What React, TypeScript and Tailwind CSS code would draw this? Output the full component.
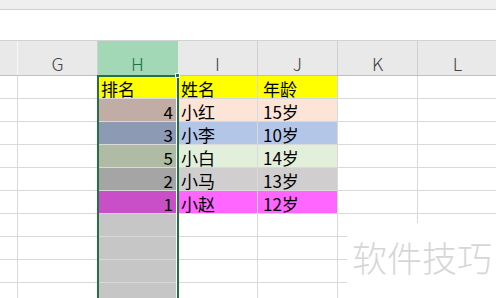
const COLS = ["G", "H", "I", "J", "K", "L"];

type Row = {
  rank?: string;
  name?: string;
  age?: string;
  rankBg?: string;
  bg?: string;
  header?: boolean;
};

const ROWS: Row[] = [
  { rank: "排名", name: "姓名", age: "年龄", rankBg: "bg-[#ffff00]", bg: "bg-[#ffff00]", header: true },
  { rank: "4", name: "小红", age: "15岁", rankBg: "bg-[#c1ada5]", bg: "bg-[#fce4d6]" },
  { rank: "3", name: "小李", age: "10岁", rankBg: "bg-[#8d9ab4]", bg: "bg-[#b4c6e7]" },
  { rank: "5", name: "小白", age: "14岁", rankBg: "bg-[#b0bba6]", bg: "bg-[#e2efda]" },
  { rank: "2", name: "小马", age: "13岁", rankBg: "bg-[#a5a5a5]", bg: "bg-[#d0cece]" },
  { rank: "1", name: "小赵", age: "12岁", rankBg: "bg-[#c84fc8]", bg: "bg-[#ff66ff]" },
  {},
  {},
  {},
  {},
];

const cell = "h-[23px] shrink-0 border-r border-b border-[#d9d9d9]";

function SheetRow({ row }: { row: Row }) {
  const empty = !row.rank;
  return (
    <div className="flex">
      <div className={`${cell} w-[18px]`} />
      <div className={`${cell} w-[80px]`} />
      <div
        className={`${cell} w-[80px] flex items-end pb-[1px] ${
          empty ? "bg-[#c6c6c6] border-[#b2b2b2]" : `${row.rankBg} border-[#b2b2b2]`
        } ${row.header ? "justify-start pl-[3px]" : "justify-end pr-[4px]"}`}
      >
        {row.rank}
      </div>
      <div className={`${cell} w-[80px] flex items-end pb-[1px] pl-[3px] ${row.bg ?? ""}`}>{row.name}</div>
      <div className={`${cell} w-[80px] flex items-end pb-[1px] pl-[5px] ${row.bg ?? ""}`}>{row.age}</div>
      <div className={`${cell} w-[80px]`} />
      <div className={`${cell} w-[80px]`} />
    </div>
  );
}

export default function App() {
  return (
    <div
      className="relative w-[496px] h-[298px] overflow-hidden bg-white text-[17px] leading-none text-black"
      style={{ fontFamily: '"Noto Sans CJK SC", "Noto Sans", sans-serif' }}
    >
      <div className="h-[10px] bg-[#efefef] border-b border-[#d2d2d2]" />
      <div className="h-[31px] bg-white border-b border-[#d2d2d2]" />

      <div className="flex h-[35px] bg-[#e9e9e9] border-b border-[#bfbfbf] text-[18px] font-light text-[#444]">
        <div className="w-[18px] shrink-0 border-r border-[#f8f8f8]" />
        {COLS.map((c) => (
          <div
            key={c}
            className={`w-[80px] shrink-0 flex items-end justify-center pb-[3px] border-r ${
              c === "H" ? "bg-[#a3d8b6] text-[#217346] border-[#a3d8b6]" : "border-[#d0d0d0]"
            }`}
          >
            {c}
          </div>
        ))}
      </div>

      {ROWS.map((row, i) => (
        <SheetRow key={i} row={row} />
      ))}

      {/* selection box on column H */}
      <div className="absolute left-[97px] top-[75px] w-[82px] h-[240px] border-2 border-[#217346]">
        <div className="absolute right-0 top-0 bottom-0 w-px bg-white" />
      </div>
      <div className="absolute left-[175px] top-[73px] w-[5px] h-[5px] bg-[#217346] border border-white" />

      {/* watermark */}
      <div className="absolute left-[347px] top-[223px] right-0 bottom-0 bg-white flex items-start pl-[5px] pt-[16px]">
        <span className="text-[35px] font-light text-[#d6d6d6] tracking-[0px]">软件技巧</span>
      </div>
    </div>
  );
}
